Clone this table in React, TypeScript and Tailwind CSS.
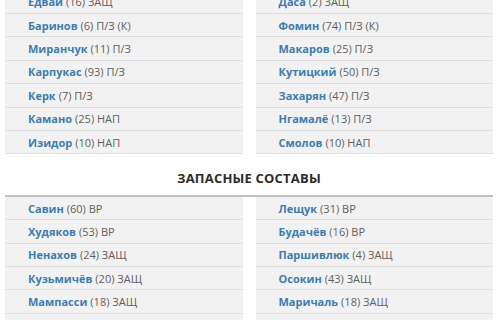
const mainLeft: [string, string][] = [
  ['Едвай', '(16) ЗАЩ'],
  ['Баринов', '(6) П/З (К)'],
  ['Миранчук', '(11) П/З'],
  ['Карпукас', '(93) П/З'],
  ['Керк', '(7) П/З'],
  ['Камано', '(25) НАП'],
  ['Изидор', '(10) НАП'],
];

const mainRight: [string, string][] = [
  ['Даса', '(2) ЗАЩ'],
  ['Фомин', '(74) П/З (К)'],
  ['Макаров', '(25) П/З'],
  ['Кутицкий', '(50) П/З'],
  ['Захарян', '(47) П/З'],
  ['Нгамалё', '(13) П/З'],
  ['Смолов', '(10) НАП'],
];

const subsLeft: [string, string][] = [
  ['Савин', '(60) ВР'],
  ['Худяков', '(53) ВР'],
  ['Ненахов', '(24) ЗАЩ'],
  ['Кузьмичёв', '(20) ЗАЩ'],
  ['Мампасси', '(18) ЗАЩ'],
];

const subsRight: [string, string][] = [
  ['Лещук', '(31) ВР'],
  ['Будачёв', '(16) ВР'],
  ['Паршивлюк', '(4) ЗАЩ'],
  ['Осокин', '(43) ЗАЩ'],
  ['Маричаль', '(18) ЗАЩ'],
];

function PlayerList({ players, more }: { players: [string, string][]; more?: boolean }) {
  return (
    <ul className="flex-1 bg-[#f2f2f2]">
      {players.map(([name, info]) => (
        <li
          key={name}
          className="h-[23.4px] flex items-center pl-[23px] border-b border-[#dedede] text-[11px] leading-none"
        >
          <span className="font-bold text-[#3b7db3]">{name}</span>
          <span className="ml-[3px] text-[#5f5f5f]">{info}</span>
        </li>
      ))}
      {/* list continues below the fold */}
      {more && <li className="h-[23.4px]" />}
    </ul>
  );
}

export default function App() {
  return (
    <div className="w-[500px] h-[320px] overflow-hidden bg-white font-['Open_Sans',sans-serif]">
      <div className="pl-[5px] pr-[7px] -mt-[9.4px]">
        <div className="flex gap-[13px]">
          <PlayerList players={mainLeft} />
          <PlayerList players={mainRight} />
        </div>

        <h3 className="mt-[15px] mb-[6px] text-center text-[13px] font-bold text-[#2b2b2b] tracking-[0.2px]">
          ЗАПАСНЫЕ СОСТАВЫ
        </h3>

        <div className="border-t-2 border-[#c0c0c0]">
          <div className="flex gap-[13px]">
            <PlayerList players={subsLeft} more />
            <PlayerList players={subsRight} more />
          </div>
        </div>
      </div>
    </div>
  );
}
